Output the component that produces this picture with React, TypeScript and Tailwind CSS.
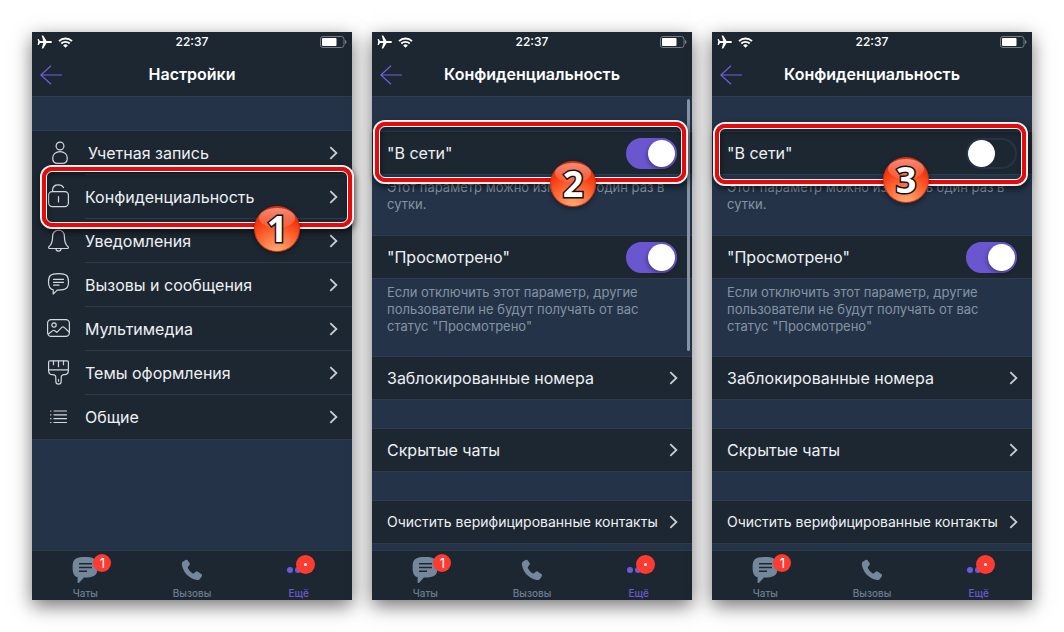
import { ReactElement, ReactNode, useState } from 'react'

interface StepProps {
	step: number
	frame: string
	badge: string
}

interface PhoneProps {
	title: string
	children: ReactNode
}

interface ToggleRowProps {
	label: string
	initial: boolean
	children?: ReactNode
}

const line = {
	fill: 'none',
	stroke: 'currentColor',
	strokeWidth: 1.2,
	strokeLinecap: 'round' as const,
	strokeLinejoin: 'round' as const,
}

const PlaneIcon = (): ReactElement => (
	<svg width="15" height="14" viewBox="0 0 15 14" fill="currentColor" aria-hidden="true">
		<path d="M15 7c0 .7-.8 1.1-1.6 1.1H9.600L6.200 13.400H4.700L6.300 8.100H3L1.700 9.900H.6L1.200 7 .6 4.100h1.100L3 5.900h3.300L4.700.6h1.500l3.400 5.300h3.800C14.200 5.900 15 6.300 15 7z" />
	</svg>
)

const WifiIcon = (): ReactElement => (
	<svg width="15" height="11" viewBox="0 0 15 11" fill="none" stroke="currentColor" aria-hidden="true">
		<path d="M1 4.100a9.300 9.300 0 0 1 13 0" strokeWidth="1.900" />
		<path d="M3.300 6.500a6 6 0 0 1 8.400 0" strokeWidth="1.800" />
		<path d="M7.500 10.800 5.200 8.400a3.400 3.400 0 0 1 4.600 0z" fill="currentColor" stroke="none" />
	</svg>
)

const BatteryIcon = (): ReactElement => (
	<svg width="27" height="12" viewBox="0 0 27 12" aria-hidden="true">
		<rect x=".5" y=".5" width="23.500" height="11" rx="2.500" fill="none" stroke="#737b84" />
		<rect x="2" y="2" width="14.500" height="8" rx="1" fill="#fff" />
		<path d="M25 4v4c1-.3 1.500-1 1.500-2S26 4.300 25 4z" fill="#737b84" />
	</svg>
)

const Chevron = (): ReactElement => (
	<svg width="9" height="14" viewBox="0 0 9 14" className="shrink-0 text-[#c9ced4]" aria-hidden="true">
		<path d="M1.300 1.200 7.400 7l-6.100 5.800" fill="none" stroke="currentColor" strokeWidth="1.800" />
	</svg>
)

const icons: Record<string, ReactElement> = {
	account: (
		<>
			<circle cx="14" cy="6" r="3.900" />
			<path d="M14 11.700c-4 0-7.300 2.400-7.300 6.200 0 3.400 1.800 5.400 4.800 5.400h5c3 0 4.800-2 4.800-5.400 0-3.800-3.300-6.200-7.300-6.200z" />
		</>
	),
	lock: (
		<>
			<rect x="2.600" y="7.600" width="19.800" height="15" rx="3.600" />
			<path d="M6.600 7.600V6.200c0-3.400 2.400-5.300 5.700-5.300 2.500 0 4.300.8 5.200 2.700M12.500 12.500v5.500" />
		</>
	),
	bell: (
		<>
			<path d="M12.500 2.200c-3.600 0-5.900 2.700-5.900 6.200 0 5.200-1 8-3.500 10.100-.9.800-.6 2 .6 2h17.600c1.200 0 1.500-1.200.6-2-2.500-2.100-3.500-4.900-3.500-10.100 0-3.500-2.300-6.200-5.900-6.200z" />
			<path d="M10 20.700c0 1.500 1 2.400 2.500 2.400s2.500-.9 2.500-2.400" />
		</>
	),
	chat: (
		<>
			<path d="M12.500 1.600c-8.300 0-10 2.300-10 8.200 0 4.900 1.100 7.300 4.700 8v4.300l4-4c9.600.2 11.300-2.200 11.300-8.300 0-5.900-1.700-8.200-10-8.200z" />
			<path d="M7.500 7.400h10M7.500 10.300h10M7.500 13.200h5.500" />
		</>
	),
	media: (
		<>
			<rect x="1.600" y="3.600" width="21.800" height="16.800" rx="3.600" />
			<circle cx="8" cy="9" r="2.200" />
			<path d="m2.400 18 4.400-3.400c.8-.6 1.300-.5 2 .1l2 1.700 5-5c.9-.9 1.500-.9 2.400 0l4.900 4.600" />
		</>
	),
	brush: (
		<>
			<path d="M4 .8h17c.8 0 1.400.5 1.400 1.300v8.500c0 2.700-1.400 4.100-4 4.100-2.300 0-3.200.9-3.200 3v3.600c0 1.800-1 2.900-2.700 2.900s-2.700-1.100-2.700-2.900v-3.600c0-2.100-.9-3-3.200-3-2.600 0-4-1.400-4-4.100V2.100c0-.8.600-1.300 1.400-1.300z" />
			<path d="M2.600 9.800h19.800M7.500 1.200v3.500M12.500 1.200v5.500M17.500 1.200v3.500M12.500 19.700v1.500" />
		</>
	),
	list: (
		<>
			<path d="M8 7h12.500M8 10.800h12.500M8 14.700h12.500M8 18.500h12.500" />
			<path d="M4.600 7h.4M4.600 10.800h.4M4.600 14.700h.4M4.600 18.500h.4" />
		</>
	),
}

const settings = [
	{ icon: 'account', label: 'Учетная запись' },
	{ icon: 'lock', label: 'Конфиденциальность' },
	{ icon: 'bell', label: 'Уведомления' },
	{ icon: 'chat', label: 'Вызовы и сообщения' },
	{ icon: 'media', label: 'Мультимедиа' },
	{ icon: 'brush', label: 'Темы оформления' },
	{ icon: 'list', label: 'Общие' },
]

// Red frame over the row with its numbered ball
const Step = ({ step, frame, badge }: StepProps): ReactElement => (
	<>
		<span
			className={`pointer-events-none absolute z-10 rounded-xl border-2 border-[#f4eeee] shadow-[1px_3px_6px_rgba(0,0,0,0.6)] ${frame}`}
		>
			<span className="block h-full rounded-[10px] border-4 border-[#e60a0a]">
				<span className="block h-full rounded-md border border-white shadow-[inset_1px_3px_5px_rgba(0,0,0,0.4)]" />
			</span>
		</span>
		<span
			className={`pointer-events-none absolute z-20 flex size-[46px] items-center justify-center rounded-full border border-[#c9361b] bg-[radial-gradient(circle_at_50%_105%,#ffb27a_0%,#ff7440_35%,#f5360c_70%,#e02a06_100%)] shadow-[0_2px_5px_rgba(0,0,0,0.4)] ${badge}`}
		>
			<span className="absolute top-px h-5 w-9 rounded-[50%] bg-linear-to-b from-white/45 to-white/10" />
			<span className="relative font-['Open_Sans',sans-serif] text-4xl leading-10 font-bold text-white [-webkit-text-stroke:3px_#111] [paint-order:stroke_fill]">
				{step}
			</span>
		</span>
	</>
)

const TabBar = (): ReactElement => (
	<nav className="grid h-[50px] grid-cols-3 border-t border-[#2d3d4d] bg-[#1d2731] text-[10px] leading-3 font-medium text-[#6c7d90]">
		<a href="#chats" className="flex flex-col items-center justify-end gap-1 pb-px">
			<span className="relative">
				<svg width="26" height="28" viewBox="0 0 26 28" aria-hidden="true">
					<path
						d="M13 2C3 2 .6 4.500.6 12c0 6.500 1.500 9.300 5 10.200v5.200c0 .9.700 1.100 1.300.5l5-5.300C23.500 22.500 25.400 20 25.400 12.200 25.400 4.500 23 2 13 2z"
						fill="#75879a"
					/>
					<path d="M7 8.800h13M7 12.500h13M7 16.200h8" fill="none" stroke="#1d2731" strokeWidth="1.500" />
				</svg>
				<span className="absolute -top-px left-[21px] flex size-[18px] items-center justify-center rounded-full bg-[#fd3b31] text-[13px] font-normal text-white">
					1
				</span>
			</span>
			Чаты
		</a>
		<a href="#calls" className="flex flex-col items-center justify-end gap-1 pb-px">
			<svg width="22" height="28" viewBox="0 0 22 28" aria-hidden="true">
				<path
					d="M4.600 5.100 2.400 6.300C.9 7.100.6 8.600 1 10.600c1.600 7.200 6.600 12.500 13.800 14.200 2 .5 3.500.1 4.500-1.300l1.400-2.100c.6-.9.400-1.700-.4-2.300l-3.500-2.400c-.8-.6-1.600-.4-2.300.2l-1.500 1.400c-.5.400-1 .4-1.500 0-2.100-1.400-3.600-3.100-4.600-5.300-.2-.5-.1-1 .3-1.400l1.200-1.500c.6-.7.600-1.400.2-2.200L7 5.700c-.5-.9-1.500-1.100-2.400-.6z"
					fill="#75879a"
				/>
			</svg>
			Вызовы
		</a>
		<a href="#more" className="flex flex-col items-center justify-end gap-1 pb-px text-[#6b5acd]">
			<span className="relative flex h-7 w-[23px] items-center gap-[2px] pt-[2px]">
				<span className="size-[6px] rounded-full bg-[#6b5bdc]" />
				<span className="size-[6px] rounded-full bg-[#6b5bdc]" />
				<span className="absolute top-0 left-[9px] flex size-[19px] items-center justify-center rounded-full bg-[#fd3b31]">
					<span className="size-[3px] rounded-full bg-white" />
				</span>
			</span>
			Ещё
		</a>
	</nav>
)

const Phone = ({ title, children }: PhoneProps): ReactElement => (
	<section className="flex min-w-0 flex-1 flex-col bg-[#243348] shadow-[0_6px_18px_rgba(0,0,0,0.55)]">
		<header className="border-b border-[#2d3d4d] bg-[#1d2731] text-white">
			<div className="grid h-5 grid-cols-3 items-center px-[5px]">
				<span className="flex items-center gap-[6px]">
					<PlaneIcon />
					<WifiIcon />
				</span>
				<span className="text-center text-xs font-medium">22:37</span>
				<span className="flex justify-end">
					<BatteryIcon />
				</span>
			</div>
			<div className="grid h-11 grid-cols-[40px_1fr_40px] items-center">
				<button type="button" aria-label="Назад" className="flex h-11 items-center pt-[2px] pl-2 text-[#7360e0]">
					<svg width="23" height="20" viewBox="0 0 23 20" aria-hidden="true">
						<path d="M22 10H.8M11 .8.8 10 11 19.200" fill="none" stroke="currentColor" strokeWidth="1.200" />
					</svg>
				</button>
				<h2 className="text-center text-base font-semibold">{title}</h2>
			</div>
		</header>
		<div className="relative flex-1">{children}</div>
		<TabBar />
	</section>
)

const ToggleRow = ({ label, initial, children }: ToggleRowProps): ReactElement => {
	const [on, setOn] = useState(initial)

	return (
		<div className="relative border-y border-[#2d3d4d] bg-[#1d2731] px-[15px]">
			<label className="flex h-[42px] items-center justify-between text-base">
				{label}
				<input
					type="checkbox"
					checked={on}
					onChange={() => setOn(!on)}
					className="h-[31px] w-[51px] appearance-none rounded-full border-2 border-[#243446] before:block before:size-[27px] before:rounded-full before:bg-white checked:border-[#6a57d0] checked:bg-[#6a57d0] checked:before:ml-5 checked:before:shadow-[-1px_2px_4px_rgba(0,0,0,0.35)]"
				/>
			</label>
			{children}
		</div>
	)
}

const LinkRow = ({ label, small }: { label: string; small?: boolean }): ReactElement => (
	<a
		href="#open"
		className="mb-7 flex h-11 items-center justify-between border-y border-[#2d3d4d] bg-[#1d2731] pr-[14px] pl-[15px] last:mb-[6px]"
	>
		<span className={small ? 'text-sm' : 'text-base'}>{label}</span>
		<Chevron />
	</a>
)

const Privacy = ({ online, children }: { online: boolean; children: ReactNode }): ReactElement => (
	<div className="pt-[34px] text-[#eef1f4]">
		<ToggleRow label={'"В сети"'} initial={online}>
			{children}
		</ToggleRow>
		<p className="h-[60px] px-[15px] pt-1 text-[13px] leading-[17px] text-[#8493a4]">
			Этот параметр можно изменять один раз в сутки.
		</p>
		<ToggleRow label={'"Просмотрено"'} initial />
		<p className="h-[77px] pt-[5px] pr-10 pl-[15px] text-[13px] leading-[17px] text-[#8493a4]">
			Если отключить этот параметр, другие пользователи не будут получать от вас статус "Просмотрено"
		</p>
		<LinkRow label="Заблокированные номера" />
		<LinkRow label="Скрытые чаты" />
		<LinkRow label="Очистить верифицированные контакты" small />
	</div>
)

const App = (): ReactElement => (
	<main className="flex gap-5 bg-white p-8 font-[Inter,sans-serif]">
		<Phone title="Настройки">
			<ul className="mt-[33px] border-y border-[#2d3d4d] bg-[#1d2731] text-[#eef1f4]">
				{settings.map(({ icon, label }) => (
					<li key={icon} className="relative">
						<a href={`#${icon}`} className="flex h-11 items-center pl-[14px]">
							<svg width="25" height="26" viewBox="0 0 25 26" className="mr-[14px] shrink-0 text-[#d3d8de]" {...line}>
								{icons[icon]}
							</svg>
							<span
								className={`flex h-11 flex-1 items-center justify-between pr-[14px] text-base ${
									icon === 'list' ? '' : 'border-b border-[#2d3b49]'
								} ${icon === 'account' ? 'pl-[3px]' : ''}`}
							>
								{label}
								<Chevron />
							</span>
						</a>
						{icon === 'lock' && (
							<Step step={1} frame="-inset-y-[10px] left-2 -right-[2px]" badge="top-[31px] left-[222px]" />
						)}
					</li>
				))}
			</ul>
		</Phone>
		<Phone title="Конфиденциальность">
			<Privacy online>
				<Step step={2} frame="-top-3 -bottom-[10px] left-px right-1" badge="top-[29px] left-[178px]" />
			</Privacy>
			<span className="absolute top-[2px] right-[2px] h-[252px] w-[3px] rounded-full bg-[#8593a2]" />
		</Phone>
		<Phone title="Конфиденциальность">
			<Privacy online={false}>
				<Step step={3} frame="-top-[10px] -bottom-3 left-px right-1" badge="top-[25px] left-[171px]" />
			</Privacy>
		</Phone>
	</main>
)

export default App
